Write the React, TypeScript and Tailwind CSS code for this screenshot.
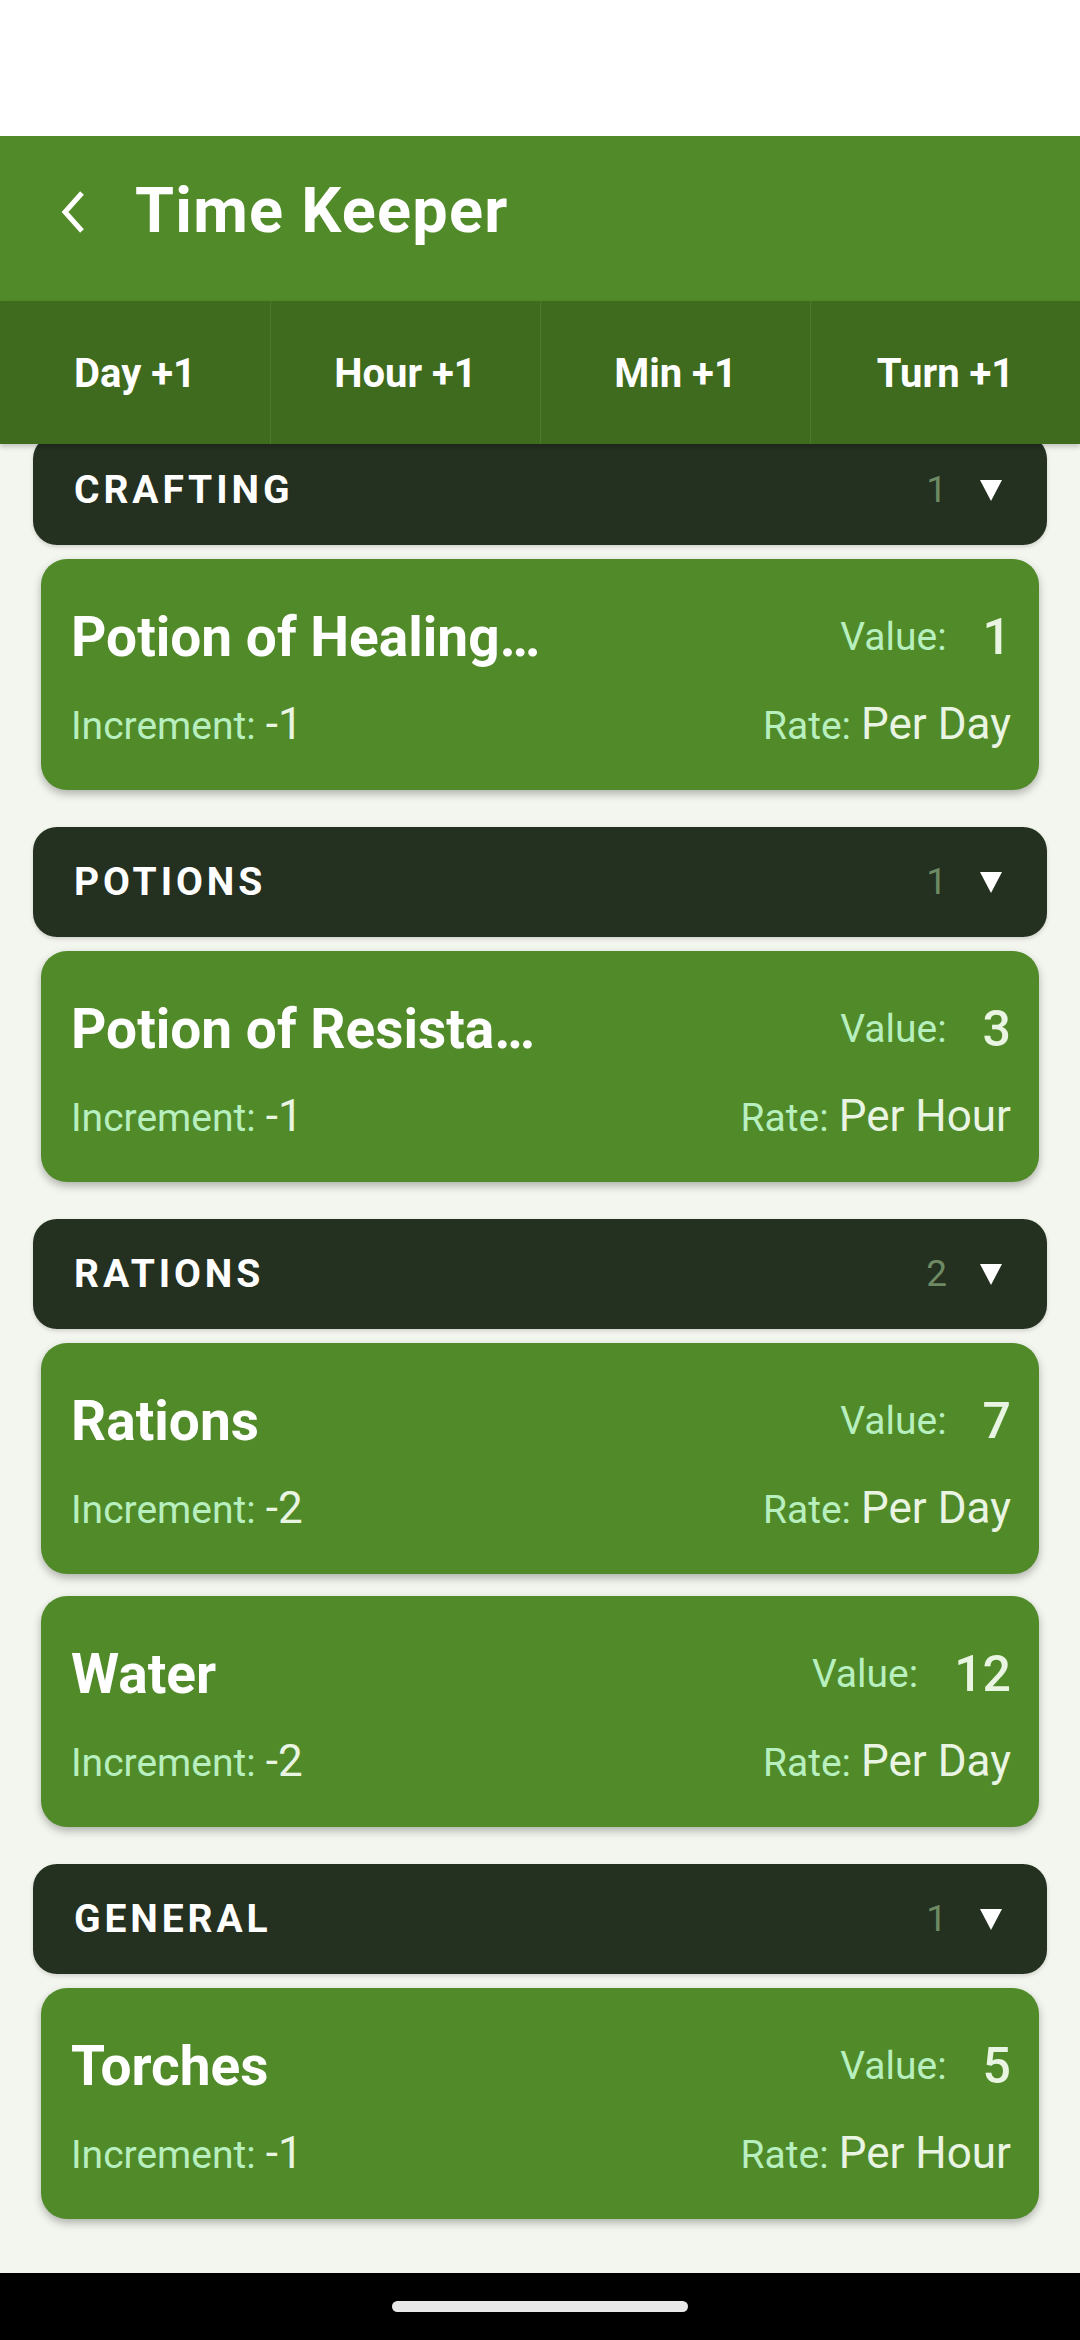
import React from "react";

type Item = {
  name: string;
  value: number;
  increment: number;
  rate: string;
};

type Section = {
  title: string;
  items: Item[];
};

const sections: Section[] = [
  {
    title: "CRAFTING",
    items: [{ name: "Potion of Healing…", value: 1, increment: -1, rate: "Per Day" }],
  },
  {
    title: "POTIONS",
    items: [{ name: "Potion of Resista…", value: 3, increment: -1, rate: "Per Hour" }],
  },
  {
    title: "RATIONS",
    items: [
      { name: "Rations", value: 7, increment: -2, rate: "Per Day" },
      { name: "Water", value: 12, increment: -2, rate: "Per Day" },
    ],
  },
  {
    title: "GENERAL",
    items: [{ name: "Torches", value: 5, increment: -1, rate: "Per Hour" }],
  },
];

const tabs = ["Day +1", "Hour +1", "Min +1", "Turn +1"];

function BackChevron() {
  return (
    <svg width="24" height="42" viewBox="0 0 24 42" fill="none" className="shrink-0">
      <polyline points="21,2 4,21 21,40" stroke="white" strokeWidth="5" strokeLinejoin="miter" />
    </svg>
  );
}

function TrackerCard({ item }: { item: Item }) {
  return (
    <div className="mx-[8px] flex h-[231px] flex-col rounded-[26px] bg-[#518a29] pl-[30px] pr-[28px] pt-[46px] shadow-[0_4px_8px_rgba(0,0,0,0.28)]">
      {/* top row: name + value */}
      <div className="flex h-[64px] items-center justify-between">
        <span className="w-1/2 truncate text-[55px] font-bold leading-[64px] text-white">{item.name}</span>
        <div className="flex items-center gap-[36px]">
          <span className="text-[39px] text-[#b8efbf]">Value:</span>
          <span className="text-[50px] font-medium text-[#e9f5e2]">{item.value}</span>
        </div>
      </div>

      {/* bottom row: increment + rate */}
      <div className="mt-[22px] flex h-[52px] items-baseline justify-between">
        <div className="flex items-baseline gap-[10px]">
          <span className="text-[39px] text-[#b8efbf]">Increment:</span>
          <span className="text-[44px] text-[#e9f5e2]">{item.increment}</span>
        </div>
        <div className="flex items-baseline gap-[10px]">
          <span className="text-[39px] text-[#b8efbf]">Rate:</span>
          <span className="text-[44px] text-[#e9f5e2]">{item.rate}</span>
        </div>
      </div>
    </div>
  );
}

function SectionBlock({ section }: { section: Section }) {
  return (
    <div className="flex flex-col">
      <div className="flex h-[110px] items-center justify-between rounded-[24px] bg-[#243020] pl-[41px] pr-[45px] shadow-[0_2px_4px_rgba(0,0,0,0.15)]">
        <span className="text-[39px] font-bold tracking-[0.1em] text-white">{section.title}</span>
        <div className="flex items-center gap-[33px]">
          <span className="text-[37px] text-[#6e8a62]">{section.items.length}</span>
          <svg width="22" height="21" viewBox="0 0 22 21">
            <polygon points="0,0 22,0 11,21" fill="white" />
          </svg>
        </div>
      </div>
      <div className="mt-[14px] flex flex-col gap-[22px]">
        {section.items.map((item) => (
          <TrackerCard key={item.name} item={item} />
        ))}
      </div>
    </div>
  );
}

export default function App() {
  return (
    <div
      className="flex h-[2340px] w-[1080px] flex-col overflow-hidden bg-[#f3f6ee]"
      style={{ fontFamily: "Roboto, 'Noto Sans', sans-serif" }}
    >
      {/* status bar */}
      <div className="h-[136px] shrink-0 bg-white" />

      {/* app bar */}
      <header className="flex h-[165px] shrink-0 items-center gap-[50px] bg-[#518a29] pb-[14px] pl-[61px]">
        <BackChevron />
        <h1 className="text-[63px] font-bold tracking-[0.02em] text-white">Time Keeper</h1>
      </header>

      {/* quick time buttons */}
      <nav className="relative z-10 grid h-[143px] shrink-0 grid-cols-4 bg-[#3e6b1d] shadow-[0_3px_5px_rgba(0,0,0,0.2)]">
        {tabs.map((t, i) => (
          <button
            key={t}
            className={`flex items-center justify-center pt-[2px] text-[40px] font-bold text-white ${
              i > 0 ? "border-l border-[#4b7a2a]" : ""
            }`}
          >
            {t}
          </button>
        ))}
      </nav>

      {/* list */}
      <main className="-mt-[9px] flex flex-1 flex-col gap-[37px] overflow-hidden px-[33px]">
        {sections.map((s) => (
          <SectionBlock key={s.title} section={s} />
        ))}
      </main>

      {/* nav bar */}
      <div className="flex h-[67px] shrink-0 items-center justify-center bg-black">
        <div className="h-[11px] w-[296px] rounded-full bg-[#e8e8e8]" />
      </div>
    </div>
  );
}
